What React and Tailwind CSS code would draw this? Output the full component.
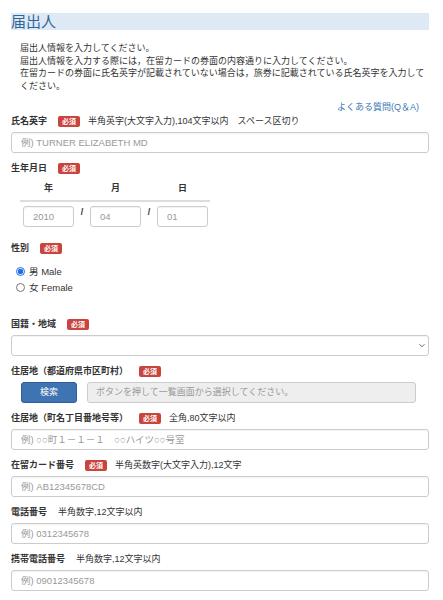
const inputCls =
  "block w-full h-[21px] rounded-[3px] border border-[#ccc] bg-white px-[9px] text-[9.5px] text-[#333] placeholder:text-[#999] outline-none shadow-[inset_0_1px_1px_rgba(0,0,0,0.05)]";

function Required() {
  return (
    <span className="inline-flex h-[11px] w-[22px] items-center justify-center rounded-[2px] bg-[#c9443d] text-[7px] font-bold leading-none text-white">
      必須
    </span>
  );
}

function Label({ text, required, note, mt = "mt-[9px]" }) {
  return (
    <div className={`flex h-[14px] items-center ${mt}`}>
      <span className="mr-[11px] text-[9px] font-bold text-[#333]">{text}</span>
      {required && <Required />}
      {note && <span className={`${required ? "ml-[8px]" : ""} text-[9px] text-[#333]`}>{note}</span>}
    </div>
  );
}

function Field({ text, required, note, placeholder }) {
  return (
    <>
      <Label text={text} required={required} note={note} />
      <div className="mt-[3px]">
        <input className={inputCls} placeholder={placeholder} />
      </div>
    </>
  );
}

export default function App() {
  return (
    <div className="min-h-screen bg-white pl-[11px] pr-[14px] pt-[13px] font-['Liberation_Sans','Noto_Sans_CJK_JP',sans-serif] text-[#333]">
      <h1 className="flex h-[17px] items-center bg-[#dde9f5] text-[15px] font-normal leading-none text-[#2f6896]">
        届出人
      </h1>

      <div className="mt-[12px] pl-[9px] text-[9px] leading-[12.7px]">
        <p>届出人情報を入力してください。</p>
        <p>届出人情報を入力する際には，在留カードの券面の内容通りに入力してください。</p>
        <p>在留カードの券面に氏名英字が記載されていない場合は，旅券に記載されている氏名英字を入力してください。</p>
      </div>

      <div className="mt-[8px] pr-[10px] text-right text-[9px] leading-[13px] text-[#3a77b6]">
        よくある質問(Q＆A)
      </div>

      <Label text="氏名英字" required note="半角英字(大文字入力),104文字以内　スペース区切り" mt="mt-[1px]" />
      <div className="mt-[3px]">
        <input className={inputCls} placeholder="例) TURNER ELIZABETH MD" />
      </div>

      <Label text="生年月日" required />
      <div className="ml-[9px] mt-[5px] w-[190px]">
        <div className="grid grid-cols-[51px_16px_51px_16px_51px] border-b-2 border-[#ddd] px-[3px] pb-[5px] text-center text-[9px] font-bold leading-[14px]">
          <span>年</span>
          <span />
          <span>月</span>
          <span />
          <span>日</span>
        </div>
        <div className="grid grid-cols-[51px_16px_51px_16px_51px] px-[3px] pt-[4px]">
          <input className={inputCls} placeholder="2010" />
          <span className="text-center text-[9px] font-bold leading-[12px]">/</span>
          <input className={inputCls} placeholder="04" />
          <span className="text-center text-[9px] font-bold leading-[12px]">/</span>
          <input className={inputCls} placeholder="01" />
        </div>
      </div>

      <Label text="性別" required mt="mt-[15px]" />
      <div className="mt-[8px] pl-[5px] text-[9.5px]">
        <label className="flex h-[16px] items-center">
          <input type="radio" name="sex" defaultChecked className="m-0 h-[9px] w-[9px] accent-[#1e6fe6]" />
          <span className="ml-[4px]">男 Male</span>
        </label>
        <label className="flex h-[16px] items-center">
          <input type="radio" name="sex" className="m-0 h-[9px] w-[9px] accent-[#1e6fe6]" />
          <span className="ml-[4px]">女 Female</span>
        </label>
      </div>

      <Label text="国籍・地域" required mt="mt-[22px]" />
      <div className="relative mt-[3px]">
        <select className={`${inputCls} appearance-none`} defaultValue="">
          <option value=""></option>
        </select>
        <svg
          className="pointer-events-none absolute right-[4px] top-[8px] h-[5px] w-[6px]"
          viewBox="0 0 6 5"
          fill="none"
          stroke="#666"
          strokeWidth="1"
        >
          <path d="M0.5 1.2 L3 3.7 L5.5 1.2" />
        </svg>
      </div>

      <Label text="住居地（都道府県市区町村）" required mt="mt-[9px]" />
      <div className="mt-[3px] ml-[10px] mr-[13px] flex gap-[10px]">
        <button className="h-[21px] w-[56px] shrink-0 rounded-[3px] border border-[#2e5f99] bg-[#3f74b2] text-[9px] text-white">
          検索
        </button>
        <input
          disabled
          className="h-[21px] flex-1 rounded-[3px] border border-[#ccc] bg-[#eee] px-[8px] text-[9px] placeholder:text-[#999]"
          placeholder="ボタンを押して一覧画面から選択してください。"
        />
      </div>

      <Field
        text="住居地（町名丁目番地号等）"
        required
        note="全角,80文字以内"
        placeholder="例) ○○町１－１－１　○○ハイツ○○号室"
      />
      <Field text="在留カード番号" required note="半角英数字(大文字入力),12文字" placeholder="例) AB12345678CD" />
      <Field text="電話番号" note="半角数字,12文字以内" placeholder="例) 0312345678" />
      <Field text="携帯電話番号" note="半角数字,12文字以内" placeholder="例) 09012345678" />
    </div>
  );
}
